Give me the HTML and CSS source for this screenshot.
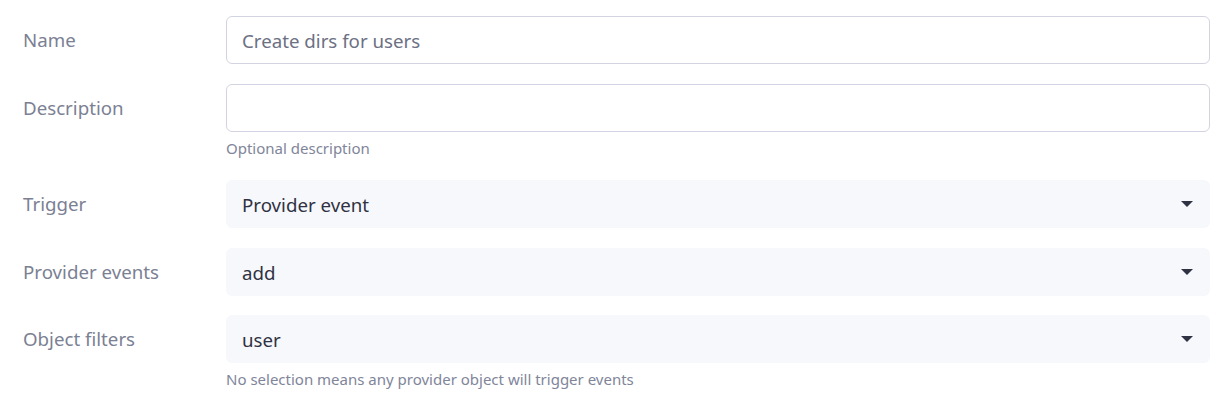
FILE: index.html
```html
<!DOCTYPE html>
<html>
<head>
<meta charset="utf-8">
<link rel="stylesheet" href="styles.css">
</head>
<body>
<form class="form">
  <div class="row">
    <label class="label">Name</label>
    <div class="field">
      <div class="input"><span class="value">Create dirs for users</span></div>
    </div>
  </div>
  <div class="row">
    <label class="label">Description</label>
    <div class="field">
      <div class="input"></div>
      <div class="help">Optional description</div>
    </div>
  </div>
  <div class="row">
    <label class="label">Trigger</label>
    <div class="field">
      <div class="select"><span class="selected">Provider event</span><span class="caret"></span></div>
    </div>
  </div>
  <div class="row">
    <label class="label">Provider events</label>
    <div class="field">
      <div class="select"><span class="selected">add</span><span class="caret"></span></div>
    </div>
  </div>
  <div class="row row-tight">
    <label class="label">Object filters</label>
    <div class="field">
      <div class="select"><span class="selected">user</span><span class="caret"></span></div>
      <div class="help">No selection means any provider object will trigger events</div>
    </div>
  </div>
</form>
</body>
</html>
```
FILE: styles.css
```css
html, body {
  margin: 0;
  padding: 0;
  background: #ffffff;
}
body {
  font-family: "Noto Sans", "Open Sans", sans-serif;
}
.form {
  display: flex;
  flex-direction: column;
  gap: 20px;
  padding: 16px 17px 0 23px;
}
.row {
  display: grid;
  grid-template-columns: 203px 1fr;
  align-items: start;
}
.row-tight {
  margin-top: -1px;
}
.label {
  font-size: 18.7px;
  color: #7b8093;
  line-height: 48px;
}
.field {
  display: flex;
  flex-direction: column;
}
.input {
  height: 48px;
  box-sizing: border-box;
  border: 1px solid #d3d4e2;
  border-radius: 6px;
  display: flex;
  align-items: center;
  padding: 0 15px;
}
.value {
  font-size: 18.7px;
  color: #6c7083;
}
.select {
  height: 48px;
  box-sizing: border-box;
  background: #f7f8fc;
  border-radius: 6px;
  display: flex;
  align-items: center;
  justify-content: space-between;
  padding: 0 17px 0 16px;
}
.selected {
  font-size: 18.7px;
  color: #2f3242;
}
.caret {
  width: 0;
  height: 0;
  border-left: 6px solid transparent;
  border-right: 6px solid transparent;
  border-top: 6px solid #2f3242;
}
.help {
  font-size: 15px;
  color: #80859a;
  margin-top: 4px;
  line-height: 24px;
}
```
